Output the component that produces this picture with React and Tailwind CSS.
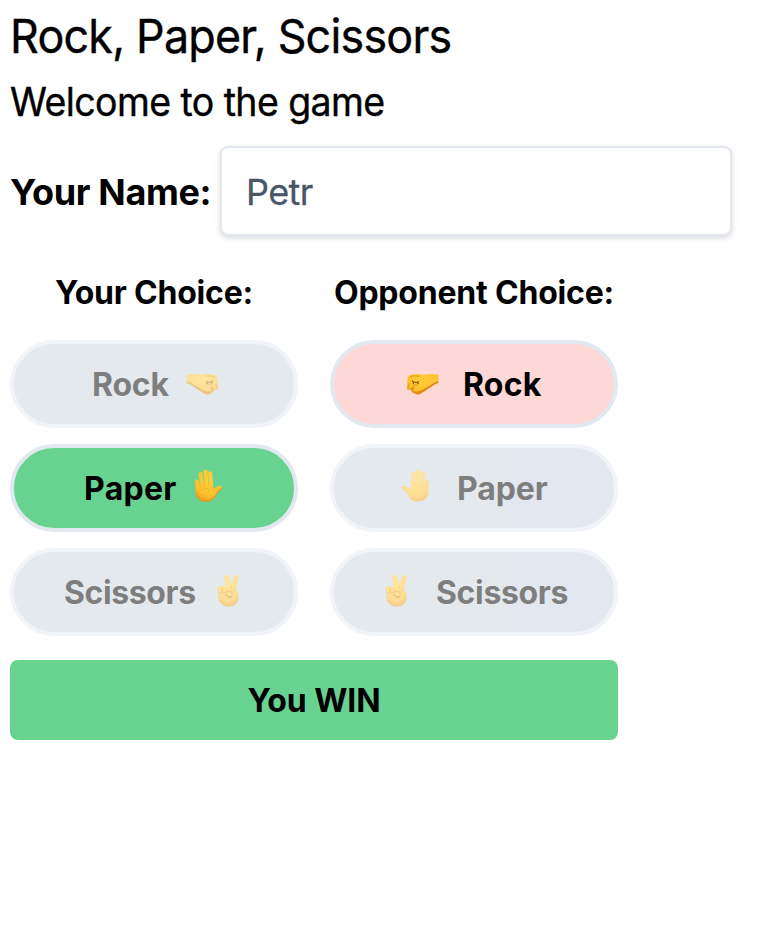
import { useId } from "react";

function Gradient({ id }) {
  return (
    <defs>
      <radialGradient id={id} cx="0.5" cy="0.3" r="0.75">
        <stop offset="0" stopColor="#ffcf38" />
        <stop offset="0.65" stopColor="#fdc130" />
        <stop offset="1" stopColor="#eb9a14" />
      </radialGradient>
    </defs>
  );
}

function Fist({ className = "" }) {
  const id = useId();
  return (
    <svg className={`h-[23px] w-[33px] shrink-0 ${className}`} viewBox="0 0 99 69" aria-hidden="true">
      <Gradient id={id} />
      <path d="M97 5 C80 1 65 4 49 5 C34 3 20 4 11 7 C5 10 4 18 4 27 L3 44 C3 48 5 51 9 51 L16 51 C16 57 20 59 25 60 C29 65 36 65 43 62 C55 56 65 48 75 42 C84 35 91 31 97 30 Z" fill={`url(#${id})`} />
      <path d="M16 51 C16 57 20 59 25 60 C29 65 36 65 43 62 C55 56 65 48 75 42 C84 35 91 31 97 30 L97 25 C86 27 79 34 70 39 C56 46 45 54 34 56 C26 57 22 54 16 51 Z" fill="#dd8a13" />
      <path d="M11 12 C20 8 31 8 40 10 M9 31 C9 37 8 42 5 46 M17 50 L21 39 C24 34 31 35 36 37" fill="none" stroke="#e19a17" strokeWidth="3" />
      <path d="M18 23 L22 27 L22 34 M22 28 C28 24 32 31 35 29 L37 24 M35 29 L38 33" fill="none" stroke="#96500c" strokeWidth="3.5" />
      <path d="M24 43 L17 51" stroke="#a95f0e" strokeWidth="2.5" />
    </svg>
  );
}

function Palm({ className = "", back = false }) {
  const id = useId();
  return (
    <svg className={`mb-[5px] h-[33px] w-[29px] shrink-0 ${className}`} viewBox="0 0 87 99" aria-hidden="true">
      <Gradient id={id} />
      <path d="M5 72 L3 37 C3 30 14 29 15 36 L17 46 L19 46 L14 18 C12 8 24 6 26 15 L30 41 L32 41 L28 9 C27 0 39 0 41 8 L43 41 L45 41 L42 13 C42 5 54 5 55 13 L57 40 L57 48 C57 54 60 60 63 58 C67 56 69 51 76 51 C84 51 87 55 82 59 C75 63 71 70 65 80 C59 93 51 97 35 97 C17 97 8 88 5 72 Z" fill={`url(#${id})`} />
      {back ? (
        <path d="M17 45 L20 53 M30 41 L31 50 M44 41 L44 49" stroke="#efab22" strokeWidth="2" />
      ) : (
        <>
          <path d="M17 45 L19 56 M30 41 L32 53 M44 41 L44 52 M56 50 C51 56 43 61 42 72 M21 64 C28 58 37 57 43 60 M55 59 C57 65 61 64 65 60" fill="none" stroke="#f0ab20" strokeWidth="2" />
          <path d="M9 79 C15 94 24 96 35 96 C52 96 59 89 65 79 C70 70 76 62 84 58" fill="none" stroke="#dd8c12" strokeWidth="2.5" />
        </>
      )}
    </svg>
  );
}

function Victory({ className = "" }) {
  const id = useId();
  return (
    <svg className={`mb-[4px] h-[33px] w-[23px] shrink-0 ${className}`} viewBox="0 0 69 99" aria-hidden="true">
      <Gradient id={id} />
      <path d="M28 43 L21 10 C20 1 32 0 35 8 L43 32 L51 8 C53 0 65 2 64 10 L57 48 C64 51 65 58 64 68 C63 86 53 97 36 97 C20 97 8 88 5 74 L2 45 C2 38 8 35 13 38 C18 33 26 36 28 43 Z" fill={`url(#${id})`} />
      <path d="M15 40 L17 54 M29 41 L31 52 M4 53 C7 57 12 58 16 54 C20 57 27 57 31 52 M55 47 C49 49 42 51 34 52 M19 57 C26 53 42 51 46 57 C48 63 44 66 39 67 M41 44 L43 35" fill="none" stroke="#dc9419" strokeWidth="2.5" />
      <path d="M24 62 C31 64 34 71 44 70" fill="none" stroke="#a75d0d" strokeWidth="3" />
      <path d="M7 78 C15 94 28 96 38 96 C53 94 61 85 63 72" fill="none" stroke="#e09018" strokeWidth="2" />
    </svg>
  );
}

function Choice({ children, className }) {
  return (
    <div className={`flex h-[88px] w-[288px] items-center rounded-full border-4 border-[#e2e8f0] text-[32px] leading-none font-bold ${className}`}>
      {children}
    </div>
  );
}

export default function App() {
  return (
    <main className="h-[930px] w-[772px] overflow-hidden bg-white pl-[10px] font-[Inter,sans-serif] text-black">
      <h1 className="h-[72px] origin-left scale-x-[0.953] text-[47px] leading-[71px] tracking-[-0.8px] [-webkit-text-stroke:0.4px_black]">Rock, Paper, Scissors</h1>
      <h2 className="h-[74px] origin-left scale-x-[0.961] text-[39px] leading-[60px] tracking-[-0.6px] [-webkit-text-stroke:0.4px_black]">Welcome to the game</h2>
      <div className="flex h-[90px] items-center">
        <label htmlFor="player" className="w-[210px] shrink-0 pt-[2px] text-[36px] font-bold tracking-[-0.35px] whitespace-nowrap">Your Name:</label>
        <input id="player" defaultValue="Petr" className="h-[90px] w-[512px] rounded-lg border-2 border-[#e2e8f0] bg-white px-6 pt-[1px] text-[36px] tracking-[-0.6px] text-[#4a5568] shadow-[0_2px_6px_rgba(0,0,0,0.1),0_2px_4px_rgba(0,0,0,0.06)] outline-none [-webkit-text-stroke:0.3px_#4a5568]" />
      </div>
      <div className="mt-8 grid w-[608px] grid-cols-2 gap-x-8">
        <section>
          <h3 className="flex h-[72px] justify-center pt-[1px] text-[32px] leading-[48px] font-bold tracking-[-0.2px] whitespace-nowrap">Your Choice:</h3>
          <div className="flex flex-col gap-4">
            <Choice className="bg-[#cad4dc] pl-[78px] opacity-50">
              <span className="w-[94px] pt-[2px] tracking-[-0.2px]">Rock</span>
              <Fist className="-scale-x-100" />
            </Choice>
            <Choice className="bg-[#68d391] pl-[70px]">
              <span className="w-[110px] pt-[2px] tracking-[0.3px]">Paper</span>
              <Palm />
            </Choice>
            <Choice className="bg-[#cad4dc] pl-[50px] opacity-50">
              <span className="w-[153px] pt-[2px] tracking-[-0.4px]">Scissors</span>
              <Victory />
            </Choice>
          </div>
        </section>
        <section>
          <h3 className="flex h-[72px] justify-center pt-[1px] text-[32px] leading-[48px] font-bold tracking-[-0.2px] whitespace-nowrap">Opponent Choice:</h3>
          <div className="flex flex-col gap-4">
            <Choice className="bg-[#fed7d7] pl-[72px]">
              <Fist />
              <span className="ml-[24px] pt-[2px] tracking-[0.2px]">Rock</span>
            </Choice>
            <Choice className="bg-linear-to-r from-[#cad4dc] from-[61.5%] to-[#c8d1e0] to-[61.5%] bg-origin-border pl-[67px] opacity-50">
              <Palm back className="-scale-x-100" />
              <span className="ml-[27px] pt-[2px] tracking-[-0.1px]">Paper</span>
            </Choice>
            <Choice className="bg-linear-to-r from-[#cad4dc] from-[61.5%] to-[#c8d1e0] to-[61.5%] bg-origin-border pl-[51px] opacity-50">
              <Victory />
              <span className="ml-[28px] pt-[2px] tracking-[-0.35px]">Scissors</span>
            </Choice>
          </div>
        </section>
      </div>
      <div className="mt-6 flex h-20 w-[608px] items-center justify-center rounded-lg bg-[#68d391] pt-[2px] text-[32px] font-bold tracking-[-0.1px]">You WIN</div>
    </main>
  );
}
